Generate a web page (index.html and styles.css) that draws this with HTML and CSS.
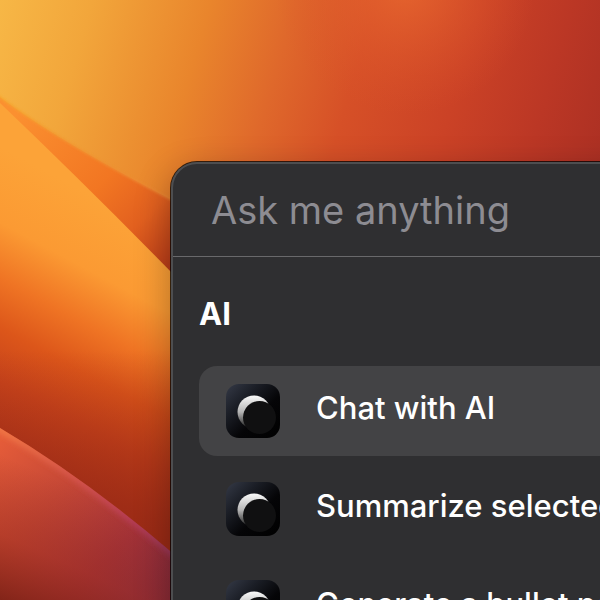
FILE: index.html
```html
<!DOCTYPE html>
<html lang="en">
<head>
<meta charset="utf-8">
<title>Ask me anything</title>
<link rel="stylesheet" href="styles.css">
</head>
<body>
<svg class="wallpaper" viewBox="0 0 600 600" preserveAspectRatio="xMinYMin slice" aria-hidden="true">
  <defs>
    <linearGradient id="sky" gradientUnits="userSpaceOnUse" x1="0" y1="0" x2="610" y2="175">
      <stop offset="0" stop-color="#f7b746"/>
      <stop offset=".14" stop-color="#f2a63b"/>
      <stop offset=".32" stop-color="#e9852c"/>
      <stop offset=".45" stop-color="#df682b"/>
      <stop offset=".57" stop-color="#d65027"/>
      <stop offset=".73" stop-color="#cb4226"/>
      <stop offset=".87" stop-color="#bb3725"/>
      <stop offset="1" stop-color="#aa2f23"/>
    </linearGradient>
    <radialGradient id="glow" gradientUnits="userSpaceOnUse" cx="0" cy="0" r="1" gradientTransform="translate(405 -15) scale(130 130)">
      <stop offset="0" stop-color="#e8682f" stop-opacity=".85"/>
      <stop offset=".4" stop-color="#e4602d" stop-opacity=".5"/>
      <stop offset="1" stop-color="#dc522a" stop-opacity="0"/>
    </radialGradient>
    <linearGradient id="fold" gradientUnits="userSpaceOnUse" x1="20" y1="110" x2="175" y2="265">
      <stop offset="0" stop-color="#fb9030"/>
      <stop offset=".5" stop-color="#f27622"/>
      <stop offset=".75" stop-color="#e2601f"/>
      <stop offset="1" stop-color="#b93a18"/>
    </linearGradient>
    <linearGradient id="foldEdge" gradientUnits="userSpaceOnUse" x1="0" y1="96" x2="172" y2="200">
      <stop offset="0" stop-color="#f7a52f"/>
      <stop offset="1" stop-color="#ea8432"/>
    </linearGradient>
    <linearGradient id="wave" gradientUnits="userSpaceOnUse" x1="110" y1="205" x2="-12" y2="433">
      <stop offset="0" stop-color="#fca338"/>
      <stop offset=".26" stop-color="#fb9a33"/>
      <stop offset=".45" stop-color="#ef7424"/>
      <stop offset=".62" stop-color="#dc561a"/>
      <stop offset=".8" stop-color="#c8441b"/>
      <stop offset="1" stop-color="#b2371a"/>
    </linearGradient>
    <linearGradient id="waveLow" gradientUnits="userSpaceOnUse" x1="0" y1="350" x2="0" y2="540">
      <stop offset="0" stop-color="#9c2a16" stop-opacity="0"/>
      <stop offset="1" stop-color="#962814" stop-opacity=".85"/>
    </linearGradient>
    <linearGradient id="hill" gradientUnits="userSpaceOnUse" x1="10" y1="430" x2="175" y2="590">
      <stop offset="0" stop-color="#e55c39"/>
      <stop offset=".35" stop-color="#c44736"/>
      <stop offset=".7" stop-color="#a4333a"/>
      <stop offset="1" stop-color="#862c44"/>
    </linearGradient>
    <linearGradient id="hillLow" gradientUnits="userSpaceOnUse" x1="80" y1="490" x2="20" y2="622">
      <stop offset="0" stop-color="#8a2416" stop-opacity="0"/>
      <stop offset=".5" stop-color="#9a2a18" stop-opacity=".4"/>
      <stop offset="1" stop-color="#701c10" stop-opacity=".9"/>
    </linearGradient>
    <linearGradient id="hillEdge" gradientUnits="userSpaceOnUse" x1="0" y1="428" x2="172" y2="552">
      <stop offset="0" stop-color="#f58048"/>
      <stop offset=".4" stop-color="#dc5a50"/>
      <stop offset=".75" stop-color="#bc4060"/>
      <stop offset="1" stop-color="#a03a62"/>
    </linearGradient>
    <clipPath id="hillClip"><path d="M0 428Q88 480 176 556V600H0Z"/></clipPath>
    <filter id="soft" x="-20%" y="-20%" width="140%" height="140%"><feGaussianBlur stdDeviation="3"/></filter>
    <filter id="fine" x="-20%" y="-20%" width="140%" height="140%"><feGaussianBlur stdDeviation="1"/></filter>
    <linearGradient id="tile" x1="0" y1="0" x2="1" y2="1">
      <stop offset="0" stop-color="#353a47"/>
      <stop offset=".3" stop-color="#1b1e26"/>
      <stop offset=".6" stop-color="#050507"/>
      <stop offset="1" stop-color="#000"/>
    </linearGradient>
    <linearGradient id="moon" x1="0" y1="0" x2="0" y2="1">
      <stop offset="0" stop-color="#fafafa"/>
      <stop offset=".5" stop-color="#b5b5b5"/>
      <stop offset="1" stop-color="#1c1c1c"/>
    </linearGradient>
    <symbol id="eclipse" viewBox="0 0 54 54">
      <rect width="54" height="54" rx="13" fill="url(#tile)"/>
      <circle cx="28" cy="28" r="16.500" fill="url(#moon)"/>
      <circle cx="33.500" cy="33.500" r="16.500" fill="#101011"/>
    </symbol>
  </defs>
  <rect width="600" height="600" fill="url(#sky)"/>
  <rect width="600" height="200" fill="url(#glow)"/>
  <path d="M0 97Q55 139 176 202V300L0 120Z" fill="url(#fold)"/>
  <path d="M-4 94Q55 139 176 202" fill="none" stroke="url(#foldEdge)" stroke-width="2" filter="url(#fine)"/>
  <path d="M0 103Q85 184 176 277V600H0Z" fill="url(#wave)"/>
  <path d="M0 350H176V600H0Z" fill="url(#waveLow)"/>
  <path d="M0 428Q88 480 176 556V600H0Z" fill="url(#hill)"/>
  <path d="M0 428Q88 480 176 556V600H0Z" fill="url(#hillLow)"/>
  <path d="M-6 425Q88 480 176 556" fill="none" stroke="url(#hillEdge)" stroke-width="6" filter="url(#soft)" clip-path="url(#hillClip)"/>
</svg>
<main class="launcher">
  <header class="search">
    <input class="search-input" type="text" placeholder="Ask me anything" aria-label="Ask me anything">
  </header>
  <section class="group">
    <h2 class="group-title">AI</h2>
    <div class="list">
      <button class="item item-active" type="button"><svg class="item-icon" aria-hidden="true"><use href="#eclipse"/></svg><span class="item-label">Chat with AI</span></button>
      <button class="item" type="button"><svg class="item-icon" aria-hidden="true"><use href="#eclipse"/></svg><span class="item-label">Summarize selected text</span></button>
      <button class="item" type="button"><svg class="item-icon" aria-hidden="true"><use href="#eclipse"/></svg><span class="item-label">Generate a bullet point</span></button>
    </div>
  </section>
</main>
</body>
</html>
```
FILE: styles.css
```css
* {
  box-sizing: border-box;
}

html {
  height: 100%;
  overflow: hidden;
}

body {
  margin: 0;
  height: 100%;
  overflow: hidden;
  display: flow-root;
  background: #d65027;
  font-family: Inter, "Liberation Sans", sans-serif;
  color: #fff;
}

.wallpaper {
  position: absolute;
  inset: 0;
  width: 100%;
  height: 100%;
}

.launcher {
  position: relative;
  margin: 162px -80px 0 171px;
  padding: 2px;
  border-radius: 26px;
  background: #2f2f31;
  box-shadow: inset 0 0 0 2px #4d4e50, 0 0 0 1px rgba(0, 0, 0, 0.75), 0 12px 36px rgba(0, 0, 0, 0.32);
}

.search {
  height: 93px;
  padding: 0 38px;
  border-bottom: 1px solid #69696b;
}

.search-input {
  display: block;
  width: 100%;
  height: 92px;
  padding: 0;
  border: 0;
  outline: 0;
  background: none;
  color: #fff;
  font: 400 38px/48px Inter, "Liberation Sans", sans-serif;
}

.search-input::placeholder {
  color: #8d8c92;
  opacity: 1;
}

.group {
  padding: 37px 26px 26px;
}

.group-title {
  margin: 0 0 32px;
  font-size: 31px;
  line-height: 40px;
  font-weight: 700;
}

.list {
  display: flex;
  flex-direction: column;
  gap: 8px;
}

.item {
  display: flex;
  align-items: center;
  gap: 36px;
  height: 90px;
  padding: 0 27px;
  border: 0;
  border-radius: 18px;
  background: transparent;
  color: #fff;
  font: 500 31px/40px Inter, "Liberation Sans", sans-serif;
  white-space: nowrap;
  text-align: left;
}

.item-active {
  background: #434345;
}

.item-icon {
  flex: none;
  width: 54px;
  height: 54px;
}

.item-label {
  padding-bottom: 6px;
}
```
